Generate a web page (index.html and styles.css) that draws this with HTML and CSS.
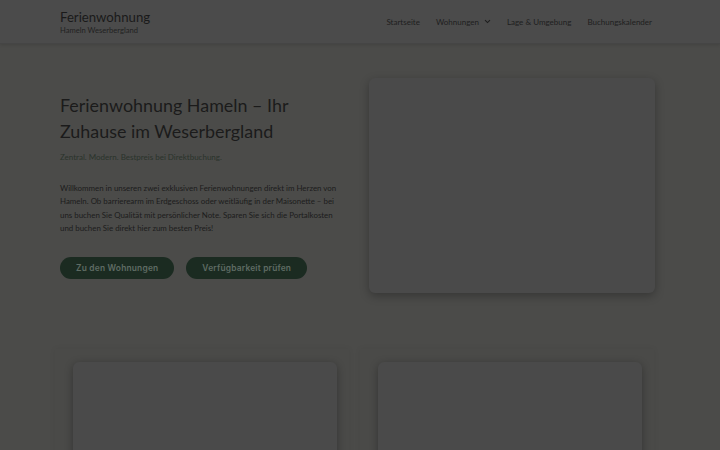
FILE: index.html
```html
<!DOCTYPE html>
<html lang="de">
<head>
    <meta charset="UTF-8">
    <meta name="viewport" content="width=device-width, initial-scale=1.0">
    <title>Ferienwohnung Hameln</title>
    <link rel="stylesheet" href="styles.css">
</head>
<body>

    <header class="site-header">
        <div class="header-inner">
            <div class="brand">
                <div class="brand-title">Ferienwohnung</div>
                <div class="brand-sub">Hameln Weserbergland</div>
            </div>
            <nav class="main-nav">
                <a href="#">Startseite</a>
                <a href="#" class="has-sub">Wohnungen
                    <svg width="7" height="5" viewBox="0 0 7 5"><path d="M1 1.2 L3.5 3.6 L6 1.2" fill="none" stroke="currentColor" stroke-width="1.1"/></svg>
                </a>
                <a href="#">Lage &amp; Umgebung</a>
                <a href="#">Buchungskalender</a>
            </nav>
        </div>
    </header>

    <section class="hero">
        <div class="hero-text">
            <h1>Ferienwohnung Hameln – Ihr Zuhause im Weserbergland</h1>
            <p class="tagline">Zentral. Modern. Bestpreis bei Direktbuchung.</p>
            <p class="intro">Willkommen in unseren zwei exklusiven Ferienwohnungen direkt im Herzen von Hameln. Ob barrierearm im Erdgeschoss oder weitläufig in der Maisonette – bei uns buchen Sie Qualität mit persönlicher Note. Sparen Sie sich die Portalkosten und buchen Sie direkt hier zum besten Preis!</p>
            <div class="buttons">
                <a href="#" class="btn">Zu den Wohnungen</a>
                <a href="#" class="btn">Verfügbarkeit prüfen</a>
            </div>
        </div>
        <div class="hero-image"></div>
    </section>

    <section class="apartments">
        <div class="apt-box"><div class="apt-card"></div></div>
        <div class="apt-box"><div class="apt-card"></div></div>
    </section>

</body>
</html>
```

FILE: styles.css
```css
* {
    box-sizing: border-box;
}
body {
    font-family: Lato, "Open Sans", Arial, sans-serif;
    margin: 0;
    padding: 0;
    background-color: #4b4b49;
    color: #1b1b1b;
    overflow: hidden;
}
a {
    color: inherit;
    text-decoration: none;
}
.site-header {
    background: #4b4b4b;
    height: 44px;
    border-bottom: 1px solid #454545;
    box-shadow: 0 1px 3px rgba(0, 0, 0, 0.12);
}
.header-inner {
    width: 600px;
    margin: 0 auto;
    padding-right: 8px;
    display: flex;
    justify-content: space-between;
    align-items: center;
    height: 100%;
}
.brand {
    padding-top: 1px;
}
.brand-title {
    font-size: 13.2px;
    color: #1a1a1a;
    line-height: 16px;
}
.brand-sub {
    font-size: 7.6px;
    color: #222;
    line-height: 11px;
}
.main-nav {
    display: flex;
    gap: 16px;
    font-size: 8px;
    color: #1e1e1e;
}
.main-nav a {
    display: flex;
    align-items: center;
    gap: 5px;
}
.hero {
    width: 600px;
    margin: 0 auto;
    padding-right: 5px;
    display: grid;
    grid-template-columns: 280px 286px;
    justify-content: space-between;
    padding-top: 34px;
}
.hero-text h1 {
    font-size: 17.9px;
    font-weight: 400;
    line-height: 26px;
    margin: 14px 0 0;
    color: #1b1b1b;
}
.tagline {
    font-size: 8px;
    color: #2a332b;
    margin: 8px 0 0;
}
.intro {
    font-size: 7.9px;
    line-height: 13.3px;
    margin: 20px 0 0;
    color: #1c1c1c;
}
.buttons {
    display: flex;
    gap: 12px;
    margin-top: 22px;
}
.btn {
    background: #1b2b21;
    color: #5f6c64;
    font-family: Inter, "Open Sans", sans-serif;
    font-weight: 600;
    font-size: 8.4px;
    letter-spacing: 0.2px;
    height: 22px;
    line-height: 22px;
    padding: 0 16px;
    border-radius: 12px;
}
.hero-image {
    height: 215px;
    background: #4a4a4a;
    border-radius: 6px;
    box-shadow: 0 3px 10px rgba(0, 0, 0, 0.28);
}
.apartments {
    width: 599px;
    margin: 56px 0 0 55px;
    display: grid;
    grid-template-columns: 1fr 1fr;
    gap: 11px;
}
.apt-box {
    background: #4a4a48;
    padding: 13px 12px 0 18px;
    height: 120px;
    box-shadow: 0 0 6px rgba(0, 0, 0, 0.06);
}
.apt-card {
    height: 200px;
    background: #4a4a4a;
    border-radius: 6px;
    box-shadow: 0 2px 8px rgba(0, 0, 0, 0.3);
}
```
